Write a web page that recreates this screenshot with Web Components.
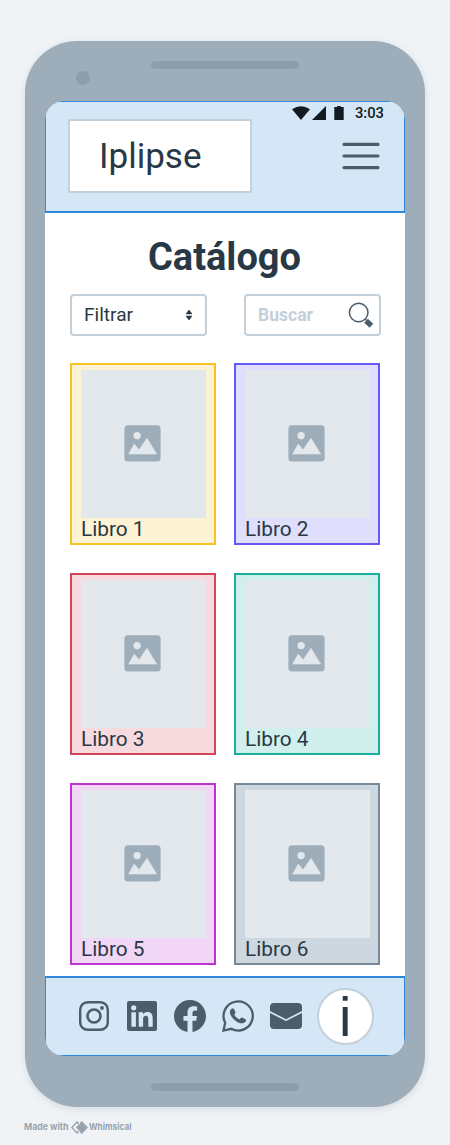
<!DOCTYPE html>
<html lang="es">
<head>
<meta charset="utf-8">
<title>Catálogo</title>
<style>
html,body{margin:0;padding:0}
body{background:#eff3f6;color:#293845;font-family:Roboto,"Liberation Sans",sans-serif;width:450px;height:1145px;overflow:hidden}
</style>
</head>
<body>
<wire-board></wire-board>
<script>
const define = (name, html, setup) => {
  const template = document.createElement('template');
  template.innerHTML = html;
  customElements.define(name, class extends HTMLElement {
    connectedCallback() {
      if (this.shadowRoot) return;
      this.attachShadow({mode: 'open'}).append(template.content.cloneNode(true));
      if (setup) setup(this, this.shadowRoot);
    }
  });
};

// One line of text, condensed or expanded to the width given in the attribute.
define('fit-text', `<style>
:host{display:block;white-space:nowrap;flex:none}
span{display:inline-block;transform-origin:0 50%;vertical-align:top}
</style><span><slot></slot></span>`, (host, root) => {
  const w = +host.getAttribute('width');
  host.style.width = w + 'px';
  const span = root.querySelector('span');
  span.style.transform = `scaleX(${w / span.getBoundingClientRect().width})`;
});

const icons = {
  menu: [38, 28, '<path d="M2 3.4h34M2 15h34M2 26.6h34" transform="translate(0 -1)" stroke="currentColor" stroke-width="3.2" stroke-linecap="round"/>'],
  wifi: [18, 14, '<path d="M0 3.2Q9-2.8 18 3.2L9 14z" fill="currentColor"/>'],
  signal: [14, 14, '<path d="M14 0v14H0z" fill="currentColor"/>'],
  battery: [10, 14, '<path d="M.3 1h2.9V0h3.6v1h2.9v13H.3z" fill="currentColor"/>'],
  sort: [6, 10, '<path d="M3 0l3 3.9H0zM3 10l3-3.9H0z" fill="currentColor" stroke="currentColor" stroke-width=".6" stroke-linejoin="round"/>'],
  search: [26, 26, '<circle cx="10.7" cy="10.5" r="9.3" fill="none" stroke="currentColor" stroke-width="1.5"/><path d="M17.4 17.3l1.2 1.2" stroke="currentColor" stroke-width="1.4"/><path d="M19.9 17.2l5 4.5-3.3 3.6-5-4.5z" fill="currentColor" stroke="currentColor" stroke-width=".7" stroke-linejoin="round"/>'],
  image: [37, 37, '<rect x=".4" y=".3" width="36.2" height="36.2" rx="3.5" fill="#9eadba"/><circle cx="13.1" cy="10.6" r="3.7" fill="#e2e8ec"/><path d="M4.6 29.1L10.2 19l4.9 5.8L23 13.2l9.7 15.9z" fill="#e2e8ec" stroke="#e2e8ec" stroke-width=".5" stroke-linejoin="round"/>'],
  instagram: [32, 32, '<rect x="2.2" y="2.2" width="27.6" height="27.6" rx="7.4" fill="none" stroke="currentColor" stroke-width="2.4"/><circle cx="16" cy="16" r="6.5" fill="none" stroke="currentColor" stroke-width="2.6"/><circle cx="24" cy="8" r="1.9" fill="currentColor"/>'],
  linkedin: [32, 32, '<rect x="1" y="1" width="30" height="30" rx="2" fill="currentColor"/><g fill="#d5e6f6"><circle cx="7.7" cy="7.8" r="2.6"/><path d="M5.4 12.3h4.5v14.4H5.4zM12.7 12.3H17v2c.8-1.3 2.3-2.4 4.3-2.4 4.4 0 5.4 2.8 5.4 6.7v8.1h-4.4v-7c0-1.8-.1-3.900-2.400-3.900-2.400 0-2.800 1.800-2.800 3.700v7.200h-4.400z"/></g>'],
  facebook: [32, 32, '<path transform="scale(2)" fill="currentColor" d="M16 8.049c0-4.446-3.582-8.05-8-8.05C3.58 0-.002 3.603-.002 8.05c0 4.017 2.926 7.347 6.75 7.951v-5.625h-2.03V8.05H6.75V6.275c0-2.017 1.195-3.131 3.022-3.131.876 0 1.791.157 1.791.157v1.98h-1.009c-.993 0-1.303.621-1.303 1.258v1.51h2.218l-.354 2.326H9.25V16c3.824-.604 6.75-3.934 6.75-7.951"/>'],
  whatsapp: [32, 32, '<path d="M1.5 30.500l1.700-7.800A14.600 14.600 0 1 1 9.200 28.800z" fill="none" stroke="currentColor" stroke-width="2.300" stroke-linejoin="miter"/><path d="M9.300 8.900C7.600 10.300 7.500 12.500 8.500 14.700 10.500 18.900 14 22.200 18.300 23.200 21 23.800 23.300 22.700 24 20.800 24.200 20 24 19.500 23.400 19.200L20.200 17.600C19.600 17.300 19.200 17.500 18.800 18L17.600 19.500C15.200 18.500 13.400 16.800 12.300 14.500L13.200 13.200C13.500 12.700 13.500 12.400 13.300 11.900L12.100 9.100C11.700 8.300 10.200 8.200 9.300 8.900z" fill="currentColor"/>'],
  mail: [32, 32, '<path d="M0 11V7a4 4 0 0 1 4-4h24a4 4 0 0 1 4 4v4L16 19.200 0 11z" fill="currentColor"/><path d="M0 13L16 21l16-8V25a4 4 0 0 1-4 4H4a4 4 0 0 1-4-4z" fill="currentColor"/>'],
  brand: [17, 13, '<path d="M7.800 3L6 1.100.900 6.500 6 11.900 7.800 10" fill="none" stroke="currentColor" stroke-width="1.400"/><path d="M10.700 0L17 6.500 10.700 13 8.700 10.900l.8-.9-1.700-.4L4.900 6.500 7.800 3.400 9.500 3l-.8-.9z" fill="currentColor"/>']
};
define('ui-icon', `<style>:host{display:block;flex:none}svg{display:block}</style><svg xmlns="http://www.w3.org/2000/svg"></svg>`, (host, root) => {
  const [w, h, body] = icons[host.getAttribute('name')];
  const svg = root.querySelector('svg');
  svg.setAttribute('width', w); svg.setAttribute('height', h);
  svg.setAttribute('viewBox', `0 0 ${w} ${h}`); svg.innerHTML = body;
});

define('status-bar', `<style>
:host{display:flex;position:absolute;right:20px;top:4px;height:14px;align-items:center;color:#111a22}
.signal{margin-left:2px}.battery{margin-left:8px}
fit-text{font-size:14.300px;font-weight:500;line-height:14px;margin-left:11px}
</style><ui-icon name="wifi"></ui-icon><ui-icon class="signal" name="signal"></ui-icon><ui-icon class="battery" name="battery"></ui-icon><fit-text width="29">3:03</fit-text>`);

define('app-header', `<style>
:host{display:flex;position:relative;box-sizing:border-box;height:112px;background:#d5e6f6;border:1px solid #2c88d9;border-bottom-width:2px;padding:17px 24px 0 22px;justify-content:space-between;align-items:flex-start}
.logo{box-sizing:border-box;width:184px;height:74px;border:2px solid #c3cfd9;background:#fff;display:flex;align-items:center;padding:2px 0 0 29px}
.logo fit-text{font-size:35px;line-height:40px}
.menu{color:#4b5c6b;margin-top:23px}
</style><div class="logo"><fit-text width="102.500">Iplipse</fit-text></div><ui-icon class="menu" name="menu"></ui-icon><status-bar></status-bar>`);

define('field-box', `<style>
:host{display:flex;box-sizing:border-box;width:137px;height:42px;border:2px solid #c3cfd9;border-radius:4px;background:#fff;align-items:center;justify-content:space-between;font-size:17.800px;line-height:20px;padding-left:12px}
</style><slot></slot>`);

define('book-card', `<style>
:host{display:block;box-sizing:border-box;width:146px;height:182px;border:2px solid var(--line);background:var(--fill);padding:5px 9px 0}
.cover{width:125px;height:148px;background:#e2e8ec;display:flex;justify-content:center;align-items:center}
ui-icon{margin:-1px 2px 0 0}
fit-text{font-size:20.800px;line-height:22px}
</style><div class="cover"><ui-icon name="image"></ui-icon></div>`, (host, root) => {
  const label = document.createElement('fit-text');
  label.setAttribute('width', '63.500');
  label.textContent = host.getAttribute('label');
  root.append(label);
});

define('catalog-view', `<style>
:host{display:block;box-sizing:border-box;height:763px;padding:29px 24px 0 25px;background:#fff}
h1{margin:0 0 22px;display:flex;justify-content:center;line-height:30px;font-size:39.500px;font-weight:700}
h1 fit-text{margin-left:-2px}
.tools{display:flex;justify-content:space-between}
.sort{margin-right:13px}
.hint{color:#c3cfd9;font-weight:700}
.search{color:#4b5c6b;margin:0 5px 0 0}
.grid{display:grid;grid-template-columns:146px 146px;gap:28px 18px;margin-top:27px}
</style>
<h1><fit-text width="153">Catálogo</fit-text></h1>
<div class="tools"><field-box><fit-text width="49">Filtrar</fit-text><ui-icon class="sort" name="sort"></ui-icon></field-box>
<field-box><fit-text class="hint" width="55">Buscar</fit-text><ui-icon class="search" name="search"></ui-icon></field-box></div>
<div class="grid">
<book-card label="Libro 1" style="--line:#f7c325;--fill:#fdf2d3"></book-card>
<book-card label="Libro 2" style="--line:#6558f5;--fill:#e0defd"></book-card>
<book-card label="Libro 3" style="--line:#d3455b;--fill:#f6dade"></book-card>
<book-card label="Libro 4" style="--line:#1aae9f;--fill:#d1efec"></book-card>
<book-card label="Libro 5" style="--line:#bd34d1;--fill:#f2d6f6"></book-card>
<book-card label="Libro 6" style="--line:#788896;--fill:#cdd7e0"></book-card>
</div>`);

define('app-footer', `<style>
:host{display:flex;box-sizing:border-box;height:80px;background:#d5e6f6;border:1px solid #2c88d9;border-top-width:2px;padding:10px 0 0 32px;align-items:flex-start;gap:16px;color:#4b5c6b}
ui-icon{margin-top:12px}
.info{box-sizing:border-box;width:57px;height:57px;border:2px solid #c3cfd9;border-radius:50%;background:#fff;color:#293845;display:flex;justify-content:center;align-items:center;margin-left:-1px;font:56px/57px "Liberation Sans",sans-serif}
</style><ui-icon name="instagram"></ui-icon><ui-icon name="linkedin"></ui-icon><ui-icon name="facebook"></ui-icon><ui-icon name="whatsapp"></ui-icon><ui-icon name="mail"></ui-icon><div class="info"><fit-text width="12.400">i</fit-text></div>`);

define('phone-frame', `<style>
:host{display:block;box-sizing:border-box;width:400px;height:1066px;background:#9eadba;border-radius:52px;padding:0 20px;box-shadow:0 2px 7px rgba(60,80,100,.14)}
.top{height:60px;display:flex;box-sizing:border-box;padding:20px 0 0 31px}
.cam{width:14px;height:14px;border-radius:50%;background:#8e9ead;margin-top:10px}
.bar{width:148px;height:8px;border-radius:4px;background:#8e9ead}
.top .bar{margin-left:61px}
.screen{height:955px;border-radius:19px;overflow:hidden}
.bottom .bar{margin:27px auto 0}
.bottom{display:flex}
</style><div class="top"><div class="cam"></div><div class="bar"></div></div><div class="screen"><slot></slot></div><div class="bottom"><div class="bar"></div></div>`);

define('made-with', `<style>
:host{display:flex;align-items:center;height:14px;color:#97a3ad;font:700 9.300px/14px Inter,sans-serif}
ui-icon{margin:0 1px 0 3px}
</style><fit-text width="44.500">Made with</fit-text><ui-icon name="brand"></ui-icon><fit-text width="42.500">Whimsical</fit-text>`);

define('wire-board', `<style>
:host{display:block;box-sizing:border-box;height:1145px;padding:41px 25px 0}
made-with{margin:13px 0 0 -1.500px}
</style><phone-frame><app-header></app-header><catalog-view></catalog-view><app-footer></app-footer></phone-frame><made-with></made-with>`);
</script>
</body>
</html>
